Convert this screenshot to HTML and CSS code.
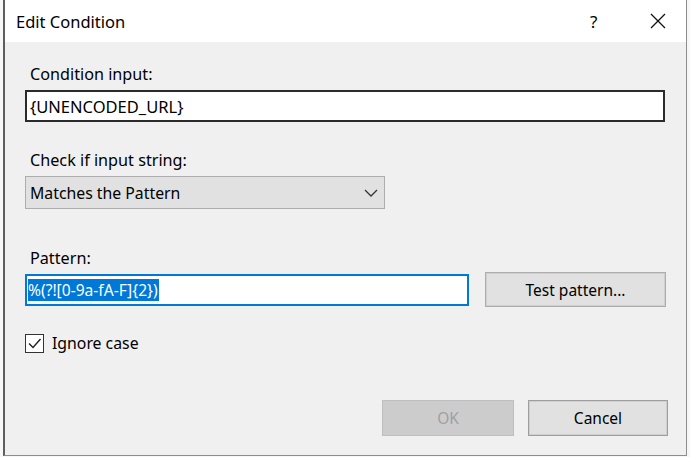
FILE: index.html
```
<!DOCTYPE html>
<html lang="en">
<head>
    <meta charset="UTF-8">
    <meta name="viewport" content="width=device-width, initial-scale=1.0">
    <title>Edit Condition</title>
    <link rel="stylesheet" href="styles.css">
</head>
<body>
    <div class="window">
        <div class="titlebar">
            <span class="title">Edit Condition</span>
            <span class="help">?</span>
            <span class="close">
                <svg width="16" height="16" viewBox="0 0 16 16">
                    <path d="M1 1 L15 15 M15 1 L1 15" stroke="#111" stroke-width="1.3" fill="none"/>
                </svg>
            </span>
        </div>
        <div class="content">
            <p class="label lbl-input">Condition input:</p>
            <div class="textbox hovered">{UNENCODED_URL}</div>

            <p class="label lbl-check">Check if input string:</p>
            <div class="combo">
                <span>Matches the Pattern</span>
                <svg class="chevron" width="14" height="8" viewBox="0 0 14 8">
                    <polyline points="1,1 7,7 13,1" stroke="#333" stroke-width="1.3" fill="none"/>
                </svg>
            </div>

            <p class="label lbl-pattern">Pattern:</p>
            <div class="pattern-row">
                <div class="textbox focused"><span class="sel">%(?![0-9a-fA-F]{2})</span></div>
                <button class="btn test-btn">Test pattern...</button>
            </div>

            <div class="check-row">
                <span class="checkbox">
                    <svg width="17" height="17" viewBox="0 0 17 17">
                        <polyline points="3,8.5 7,12.5 14.5,4" stroke="#222" stroke-width="1.4" fill="none"/>
                    </svg>
                </span>
                <span class="check-label">Ignore case</span>
            </div>

            <div class="actions">
                <button class="btn ok-btn" disabled>OK</button>
                <button class="btn cancel-btn">Cancel</button>
            </div>
        </div>
    </div>
</body>
</html>
```

FILE: styles.css
```
* {
    margin: 0;
    padding: 0;
    box-sizing: border-box;
}

body {
    background-color: #f7f7f7;
    font-family: "Noto Sans", "Open Sans", sans-serif;
    color: #000;
}

.window {
    margin-left: 3px;
    width: 684px;
    height: 456px;
    background-color: #f0f0f0;
    border: 1px solid #8c8c8c;
    border-left: 2px solid #5e5e5e;
    border-top: none;
    display: flex;
    flex-direction: column;
}

.titlebar {
    height: 42px;
    background-color: #fff;
    display: flex;
    align-items: center;
    padding-left: 11px;
    font-size: 16.5px;
}

.title {
    flex: 1;
}

.help {
    width: 16px;
    margin-right: 44px;
    font-size: 17px;
}

.close {
    width: 16px;
    height: 16px;
    margin-right: 20px;
    display: flex;
}

.content {
    padding: 0 18px 0 20px;
    font-size: 16.2px;
}

.label {
    height: 20px;
    line-height: 20px;
    padding-left: 5px;
}

.lbl-input {
    margin-top: 22px;
}

.lbl-check {
    margin-top: 28px;
}

.lbl-pattern {
    margin-top: 39px;
}

.textbox {
    height: 32px;
    background-color: #fff;
    border: 1px solid #7a7a7a;
    display: flex;
    align-items: center;
    padding-left: 3px;
}

.hovered {
    margin-top: 6px;
    width: 640px;
    border: 2px solid #2b2b2b;
    font-size: 16.5px;
}

.focused {
    width: 444px;
    border: 2px solid #0078d7;
    padding-left: 1px;
    font-size: 15.6px;
}

.sel {
    background-color: #0078d7;
    color: #fff;
    line-height: 22px;
    padding-right: 1px;
}

.combo {
    margin-top: 6px;
    width: 360px;
    height: 33px;
    background-color: #e1e1e1;
    border: 1px solid #adadad;
    display: flex;
    align-items: center;
    justify-content: space-between;
    padding: 0 6px 0 4px;
    font-size: 15.8px;
}

.pattern-row {
    margin-top: 4px;
    height: 35px;
    display: flex;
    align-items: center;
    gap: 16px;
}

.btn {
    font-family: "Noto Sans", "Open Sans", sans-serif;
    font-size: 15.5px;
    background-color: #e1e1e1;
    border: 1px solid #adadad;
    box-shadow: inset 0 0 0 1px #cfcfcf;
    color: #000;
}

.test-btn {
    width: 181px;
    height: 35px;
}

.check-row {
    margin-top: 26px;
    height: 20px;
    display: flex;
    align-items: center;
    gap: 8px;
    font-size: 15.8px;
}

.checkbox {
    width: 19px;
    height: 19px;
    border: 1px solid #333;
    background-color: #fff;
    display: flex;
    align-items: center;
    justify-content: center;
}

.actions {
    margin-top: 47px;
    display: flex;
    justify-content: flex-end;
    gap: 14px;
}

.ok-btn {
    width: 132px;
    height: 36px;
    background-color: #cccccc;
    border-color: #bfbfbf;
    box-shadow: none;
    color: #a0a0a0;
}

.cancel-btn {
    width: 140px;
    height: 36px;
    border: 1px solid #9e9e9e;
}
```
